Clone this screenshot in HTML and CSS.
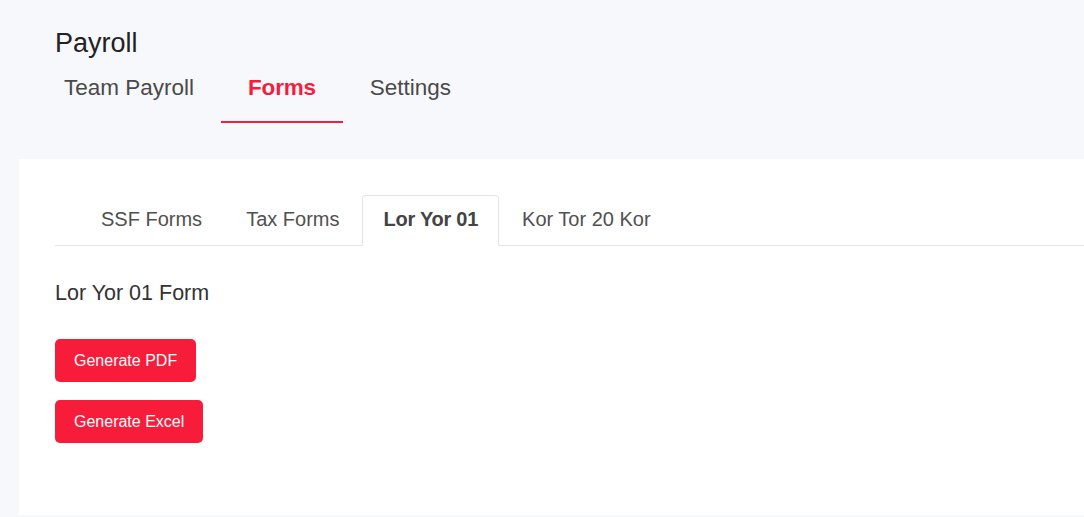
FILE: index.html
```html
<!DOCTYPE html>
<html>
<head>
<meta charset="utf-8">
<link rel="stylesheet" href="styles.css">
</head>
<body>
<header class="page-header">
  <h1 class="page-title">Payroll</h1>
  <nav class="main-nav">
    <a class="main-tab">Team Payroll</a>
    <a class="main-tab is-active">Forms</a>
    <a class="main-tab">Settings</a>
  </nav>
</header>
<main class="panel">
  <ul class="sub-tabs">
    <li class="sub-tab">SSF Forms</li>
    <li class="sub-tab">Tax Forms</li>
    <li class="sub-tab is-active">Lor Yor 01</li>
    <li class="sub-tab">Kor Tor 20 Kor</li>
  </ul>
  <h2 class="form-title">Lor Yor 01 Form</h2>
  <div class="actions">
    <button class="btn">Generate PDF</button>
    <button class="btn">Generate Excel</button>
  </div>
</main>
</body>
</html>
```
FILE: styles.css
```css
* { box-sizing: border-box; }
html, body { margin: 0; padding: 0; }
body {
  background: #f7f8fc;
  font-family: "Liberation Sans", Arial, sans-serif;
  height: 517px;
  overflow: hidden;
}
.page-header {
  padding: 28px 0 0 55px;
}
.page-title {
  margin: 0;
  font-size: 27px;
  line-height: 30px;
  font-weight: normal;
  color: #222;
}
.main-nav {
  display: flex;
  margin-left: -18px;
  padding-top: 17px;
}
.main-tab {
  display: block;
  font-size: 22.5px;
  line-height: 26px;
  padding: 0 27px 20px;
  border-bottom: 2px solid transparent;
  color: #4a4a4a;
}
.main-tab.is-active {
  color: #f61c3b;
  font-weight: bold;
  letter-spacing: -0.2px;
  border-bottom-color: #f61c3b;
}
.panel {
  margin: 36px 0 0 19px;
  background: #fff;
  height: 356px;
  padding: 36px 0 0 36px;
}
.sub-tabs {
  list-style: none;
  margin: 0;
  padding: 0 0 0 25px;
  display: flex;
  border-bottom: 1px solid #e4e4e4;
}
.sub-tab {
  margin: 0 2px -1px 0;
  padding: 9px 20px 12px;
  font-size: 20px;
  line-height: 28px;
  color: #505050;
  border: 1px solid transparent;
  border-radius: 4px 4px 0 0;
}
.sub-tab.is-active {
  background: #fff;
  border-color: #e4e4e4 #e4e4e4 transparent;
  font-weight: bold;
  letter-spacing: -0.25px;
  color: #444;
}
.form-title {
  margin: 35px 0 0;
  font-size: 21.5px;
  line-height: 24px;
  font-weight: normal;
  color: #333;
}
.actions {
  margin-top: 34px;
  display: flex;
  flex-direction: column;
  align-items: flex-start;
  gap: 18px;
}
.btn {
  height: 43px;
  padding: 0 19px;
  border: 0;
  border-radius: 5px;
  background: #f81c3b;
  color: #fff;
  font-family: "Liberation Sans", Arial, sans-serif;
  font-size: 16px;
}
```
